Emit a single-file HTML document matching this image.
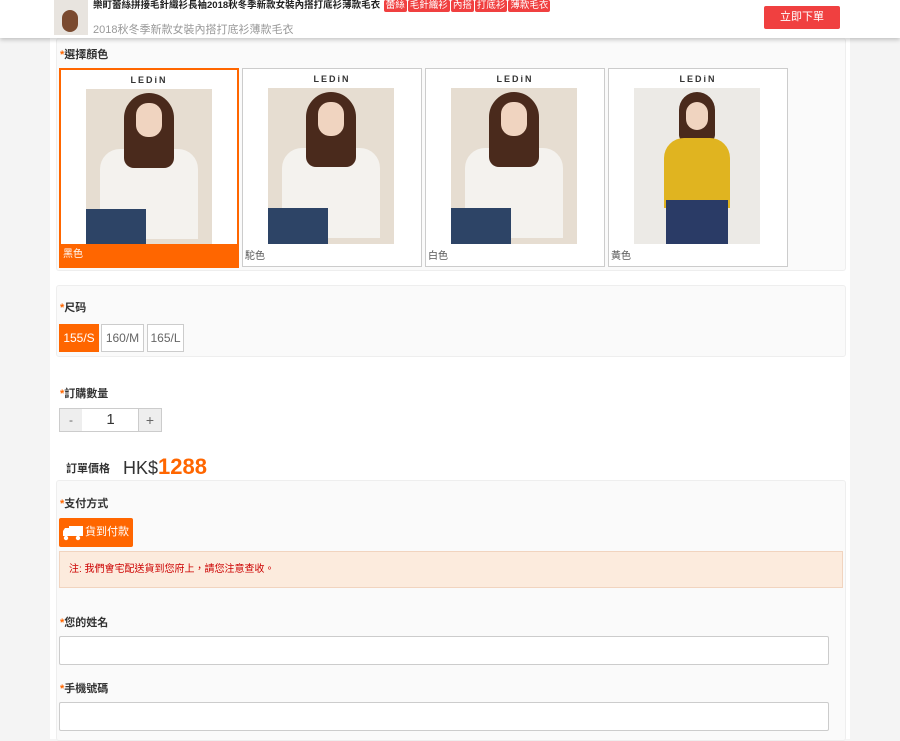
<!DOCTYPE html><html><head><meta charset="utf-8"><style>
body{margin:0;width:900px;height:739px;overflow:hidden;background:#f4f4f4;font-family:"Liberation Sans","Noto Sans CJK TC",sans-serif;font-size:12px;color:#333;position:relative}
.wrap{position:absolute;left:50px;top:0;width:800px;height:739px;background:#fff}
.top{position:absolute;left:0;top:0;width:900px;height:38px;background:#fff;box-shadow:0 2px 4px rgba(0,0,0,.2);z-index:5}
.sec{position:absolute;left:56px;width:788px;background:#fafafa;border:1px solid #eee;border-radius:3px}
.lbl{position:absolute;font-weight:bold;font-size:11px;color:#333}
.lbl b{color:#f60}
.tag{display:inline-block;background:#f04040;color:#fff;font-size:9.5px;padding:0 2px;border-radius:2px;margin-left:1px;line-height:12px;font-weight:normal}
.card{position:absolute;top:68px;width:178px;height:197px;border:1px solid #ccc;background:#fff}
.card .img{position:absolute;left:25px;top:19px;width:126px;height:156px;background:#e6ddd1;overflow:hidden}
.card .logo{position:absolute;top:5px;width:100%;text-align:center;font-size:9px;font-weight:bold;letter-spacing:2px}
.card .nm{position:absolute;left:2px;bottom:4px;font-size:10px;color:#555}
.hair{position:absolute;left:38px;top:4px;width:50px;height:75px;background:#4a2a1c;border-radius:25px 25px 10px 10px}
.face{position:absolute;left:50px;top:14px;width:26px;height:34px;background:#f0d4c0;border-radius:12px}
.top2{position:absolute;left:14px;top:60px;width:98px;height:90px;background:#f4f2ee;border-radius:20px 20px 0 0}
.jean{position:absolute;left:0;top:120px;width:60px;height:40px;background:#2d4466}
.inp{position:absolute;left:59px;width:768px;height:27px;border:1px solid #ccc;background:#fff;border-radius:2px}
.sz{position:absolute;top:324px;height:26px;line-height:26px;border:1px solid #ccc;background:#fff;color:#666;font-size:12px;text-align:center}
</style></head><body>
<div class="wrap"></div>
<div class="top">
<div style="position:absolute;left:54px;top:0;width:34px;height:35px;background:#e8e4df"><div style="position:absolute;left:8px;top:10px;width:16px;height:22px;background:#7a4a30;border-radius:8px"></div></div>
<div style="position:absolute;left:93px;top:0;font-weight:bold;font-size:9.5px;line-height:12px;color:#222;white-space:nowrap">樂町蕾絲拼接毛針織衫長袖2018秋冬季新款女裝內搭打底衫薄款毛衣 <span class="tag">蕾絲</span><span class="tag">毛針織衫</span><span class="tag">內搭</span><span class="tag">打底衫</span><span class="tag">薄款毛衣</span></div>
<div style="position:absolute;left:93px;top:21px;font-size:11px;color:#999">2018秋冬季新款女裝內搭打底衫薄款毛衣</div>
<div style="position:absolute;left:764px;top:6px;width:76px;height:23px;background:#f04040;color:#fff;font-size:11px;line-height:23px;text-align:center;border-radius:2px">立即下單</div>
</div>
<div class="sec" style="top:38px;height:232px;border-top:none"></div>
<div class="lbl" style="left:60px;top:46px"><b>*</b>選擇顏色</div>
<div class="card" style="left:59px;border:2px solid #f60;width:176px;height:196px"><div class="logo">LEDiN</div><div class="img"><div class="top2"></div><div class="hair"></div><div class="face"></div><div class="jean"></div></div><div style="position:absolute;left:0;bottom:0;width:100%;height:22px;background:#f60"></div><div class="nm" style="color:#fff;bottom:6px">黑色</div></div>
<div class="card" style="left:242px"><div class="logo">LEDiN</div><div class="img"><div class="top2"></div><div class="hair"></div><div class="face"></div><div class="jean"></div></div><div class="nm">駝色</div></div>
<div class="card" style="left:425px"><div class="logo">LEDiN</div><div class="img"><div class="top2"></div><div class="hair"></div><div class="face"></div><div class="jean"></div></div><div class="nm">白色</div></div>
<div class="card" style="left:608px"><div class="logo">LEDiN</div><div class="img" style="background:#eceae6"><div class="hair" style="left:45px;width:36px;height:50px"></div><div class="face" style="left:52px;width:22px;height:28px"></div><div class="top2" style="left:30px;top:50px;width:66px;height:70px;background:#e0b420"></div><div class="jean" style="left:32px;top:112px;width:62px;height:44px;background:#2a3b66"></div></div><div class="nm">黃色</div></div>
<div class="sec" style="top:285px;height:70px"></div>
<div class="lbl" style="left:60px;top:299px"><b>*</b>尺码</div>
<div class="sz" style="left:59px;width:38px;background:#f60;color:#fff;border-color:#f60">155/S</div>
<div class="sz" style="left:101px;width:41px">160/M</div>
<div class="sz" style="left:147px;width:35px">165/L</div>
<div class="lbl" style="left:60px;top:385px"><b>*</b>訂購數量</div>
<div style="position:absolute;left:59px;top:408px;width:101px;height:22px;border:1px solid #ccc;background:#fff">
<div style="position:absolute;left:0;top:0;width:22px;height:22px;background:#eee;text-align:center;line-height:22px;color:#666">-</div>
<div style="position:absolute;left:23px;top:0;width:55px;text-align:center;line-height:22px;font-size:15px">1</div>
<div style="position:absolute;right:0;top:0;width:22px;height:22px;background:#eee;border-left:1px solid #ccc;text-align:center;line-height:22px;color:#666;font-size:14px">+</div></div>
<div class="lbl" style="left:66px;top:460px">訂單價格</div>
<div style="position:absolute;left:123px;top:454px;font-size:18px;color:#333">HK$<span style="color:#f60;font-weight:bold;font-size:22px">1288</span></div>
<div class="sec" style="top:480px;height:259px"></div>
<div class="lbl" style="left:60px;top:495px"><b>*</b>支付方式</div>
<div style="position:absolute;left:59px;top:518px;width:74px;height:29px;background:#f60;color:#fff;font-size:11px;line-height:29px;border-radius:2px"><svg style="position:absolute;left:3px;top:7px" width="22" height="16" viewBox="0 0 22 16"><rect x="7" y="1" width="14" height="10" fill="#fff"/><path d="M1 6 L3 3 H7 V11 H1Z" fill="#fff"/><circle cx="4" cy="13" r="2.2" fill="#fff"/><circle cx="16" cy="13" r="2.2" fill="#fff"/></svg><span style="position:absolute;left:26px">貨到付款</span></div>
<div style="position:absolute;left:59px;top:551px;width:782px;height:35px;background:#fcebdd;border:1px solid #f1d4bf;color:#c00;font-size:10px;line-height:35px;text-indent:9px">注: 我們會宅配送貨到您府上，請您注意查收。</div>
<div class="lbl" style="left:60px;top:614px"><b>*</b>您的姓名</div>
<div class="inp" style="top:636px"></div>
<div class="lbl" style="left:60px;top:680px"><b>*</b>手機號碼</div>
<div class="inp" style="top:702px"></div>
</body></html>
